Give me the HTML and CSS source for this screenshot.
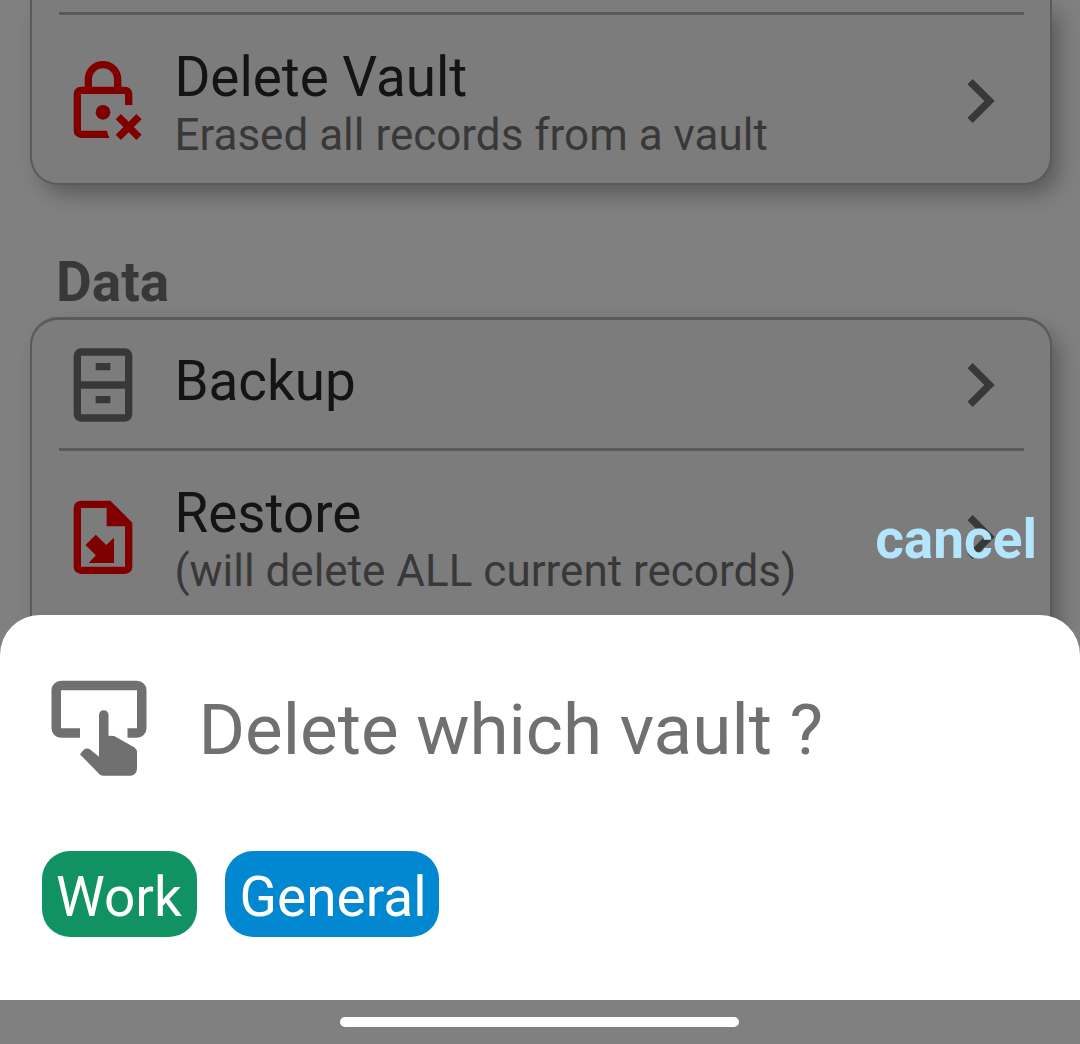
FILE: index.html
```html
<!DOCTYPE html>
<html lang="en">
<head>
<meta charset="utf-8">
<title>Delete which vault ?</title>
<link rel="stylesheet" href="styles.css">
</head>
<body>
<div class="screen">
  <main class="settings">
    <section class="card card-vault">
      <div class="divider"></div>
      <div class="row row-tall">
        <svg class="icon danger" viewBox="0 -.08 24 24"><path d="M12 1a5 5 0 0 0-5 5v2H6a2 2 0 0 0-2 2v10a2 2 0 0 0 2 2h7.8a6 6 0 0 1-.7-2H6V10h12v3h2v-3a2 2 0 0 0-2-2h-1V6a5 5 0 0 0-5-5zM9 8V6a3 3 0 0 1 6 0v2z"/><circle cx="12" cy="15" r="2"/><path d="M21.12 15.46L19 17.59l-2.12-2.13-1.42 1.42L17.59 19l-2.13 2.12 1.42 1.42L19 20.41l2.12 2.13 1.42-1.42L20.41 19l2.13-2.12z"/></svg>
        <div class="label">
          <div class="name">Delete Vault</div>
          <div class="hint">Erased all records from a vault</div>
        </div>
        <svg class="icon chevron" viewBox="0 0 24 24"><path d="M8.59 16.58L13.17 12 8.59 7.41 10 6l6 6-6 6z"/></svg>
      </div>
    </section>
    <h2 class="heading">Data</h2>
    <section class="card card-data">
      <div class="row row-short">
        <svg class="icon" viewBox="0 0 24 24"><path fill-rule="evenodd" d="M6 2h12a2 2 0 0 1 2 2v16a2 2 0 0 1-2 2H6a2 2 0 0 1-2-2V4a2 2 0 0 1 2-2zM6 4v7h12V4zM6 13v7h12v-7zM10 6h4v2h-4zM10 15h4v2h-4z"/></svg>
        <div class="label"><div class="name">Backup</div></div>
        <svg class="icon chevron" viewBox="0 0 24 24"><path d="M8.59 16.58L13.17 12 8.59 7.41 10 6l6 6-6 6z"/></svg>
      </div>
      <div class="divider"></div>
      <div class="row row-tall">
        <svg class="icon danger" viewBox="0 -.08 24 24"><path fill-rule="evenodd" d="M6 2h8l6 6v12a2 2 0 0 1-2 2H6a2 2 0 0 1-2-2V4a2 2 0 0 1 2-2zM6 4v16h12V9h-5V4zM10.05 11.3L7.22 14.1l2.83 2.83L8.1 19H15v-6.9l-2.12 2z"/></svg>
        <div class="label">
          <div class="name">Restore</div>
          <div class="hint">(will delete ALL current records)</div>
        </div>
        <svg class="icon chevron" viewBox="0 0 24 24"><path d="M8.59 16.58L13.17 12 8.59 7.41 10 6l6 6-6 6z"/></svg>
      </div>
    </section>
  </main>

  <div class="overlay">
    <div class="cancel">cancel</div>
    <section class="sheet">
      <div class="prompt">
        <svg class="tap" viewBox="0 -.04 24 24"><path d="M4 2h16a2 2 0 0 1 2 2v8a2 2 0 0 1-2 2h-2v-2h2V4H4v8h4v2H4a2 2 0 0 1-2-2V4a2 2 0 0 1 2-2z"/><path d="M12 9.2a1 1 0 0 1 2 0v4.4l1.2.05 4.2 2.35q.6.4.6 1.1v3.5q-.1 1.2-1.3 1.4h-5.8q-.6 0-.9-.4l-4-4.1.8-.95q.3-.3.8-.3l.4.15L12 18z"/></svg>
        <div class="question">Delete which vault ?</div>
      </div>
      <div class="chips">
        <div class="chip work">Work</div>
        <div class="chip general">General</div>
      </div>
    </section>
    <div class="navbar"><div class="handle"></div></div>
  </div>
</div>
</body>
</html>
```
FILE: styles.css
```css
* { box-sizing: border-box; }
body { margin: 0; background: #808080; font-family: Roboto, sans-serif; }
.screen { position: relative; height: 1044px; overflow: hidden; }
.settings { padding: 0 28.5px 0 30px; }
.card {
  background: #7c7c7c;
  border: solid #5a5a5a;
  border-width: 3px 2px 2px;
  border-radius: 28px;
  padding: 0 25.5px 0 27px;
  box-shadow: 9px 11px 21px -2px rgba(0, 0, 0, .3);
}
.card-vault { height: 185px; border-top: 0; border-radius: 0 0 28px 28px; padding-top: 12px; }
.card-data { height: 480px; }
.divider { height: 3px; background: #5a5a5a; }
.row { display: flex; color: #383838; }
.row-tall { padding-top: 30px; height: 167px; }
.row-short { height: 128px; padding-top: 13px; }
.icon { width: 88px; height: 88px; flex: none; margin-top: 8px; fill: currentColor; }
.row-tall .icon { margin-top: 12px; }
.danger { fill: #800000; }
.label { flex: 1; padding-left: 27.4px; white-space: nowrap; }
.row-short .label { padding-top: 16px; }
.name { font-size: 54.8px; line-height: 64px; color: #141414; }
.hint { font-size: 44px; line-height: 52px; }
.heading { margin: 65px 0 3px 26px; font-size: 55px; line-height: 64px; font-weight: 700; color: #383838; }
.overlay { position: absolute; left: 0; right: 0; bottom: 0; }
.cancel { padding: 0 43px 44px; font-size: 55px; line-height: 64px; font-weight: 700; color: #b3e5fc; text-align: right; }
.sheet { height: 385px; background: #fff; border-radius: 40px 40px 0 0; padding: 56px 42px 0; }
.prompt { display: flex; align-items: center; color: #707070; }
.tap { width: 114px; height: 114px; fill: currentColor; }
.question { margin-left: 42.5px; padding-top: 4px; font-size: 71px; line-height: 84px; }
.chips { display: flex; gap: 28px; margin-top: 66px; }
.chip { height: 86px; border-radius: 28px; padding: 14px 14px 0; font-size: 55px; line-height: 64px; color: #fff; }
.work { width: 155px; background: #119263; }
.general { width: 214px; padding-left: 14.5px; background: #0288d1; }
.navbar { height: 44px; background: #808080; padding: 17px 0 0 340px; }
.handle { width: 399px; height: 10px; border-radius: 5px; background: #fff; }
```
